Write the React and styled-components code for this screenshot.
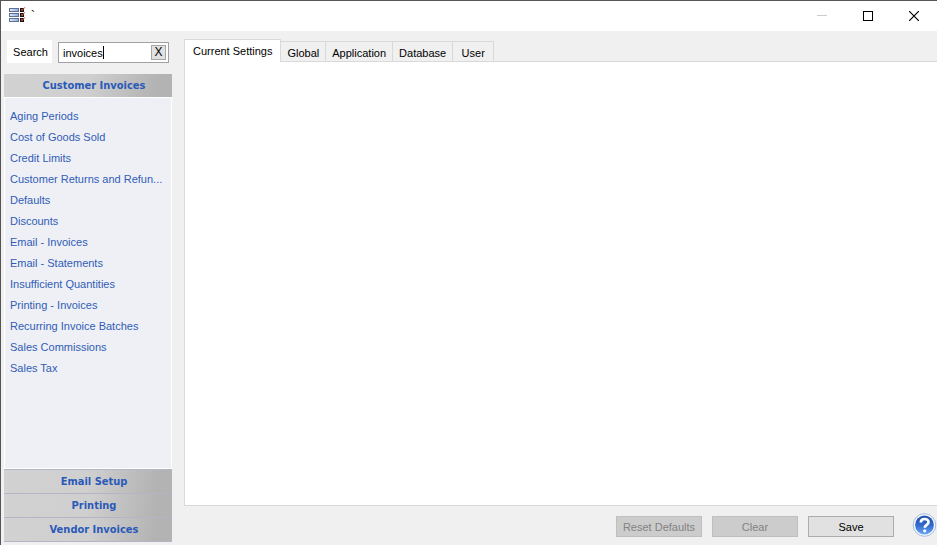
import { useState } from "react";
import styled, { createGlobalStyle } from "styled-components";

const GlobalStyle = createGlobalStyle`
    * {
        box-sizing:border-box;
    }
    body {
        margin:0;
        background-color:#f0f0f0;
        font-family:"Liberation Sans", Arial, sans-serif;
        font-size:11px;
        line-height:16px;
        color:#000;
    }
    button, input {
        font:inherit;
        color:inherit;
    }
`;

const Window = styled.div`
    display:flex;
    flex-direction:column;
    min-height:100vh;
    border-top:1px solid #555;
    border-left:1px solid #555;
`;

// ======================================================================
// Title bar

const TitleBar = styled.header`
    display:flex;
    align-items:center;
    height:30px;
    padding-left:8px;
    background-color:#fff;
`;

const Title = styled.span`
    flex:1;
    padding-left:4px;
    font-size:12px;
`;

const WindowButton = styled.button`
    display:flex;
    align-items:center;
    justify-content:center;
    width:46px;
    height:30px;
    padding:0;
    border:0;
    background:none;
    color:${props=>props.disabled ? "#ccc" : "#000"};
`;

const AppIcon = ()=>{
    return (
        <svg width="18" height="18" viewBox="0 0 18 18" aria-hidden="true">
            <defs>
                <linearGradient id="bar">
                    <stop offset="0" stopColor="#dfeaff" />
                    <stop offset="1" stopColor="#8fa9e6" />
                </linearGradient>
            </defs>
            {[0, 5, 10].map(y=>(
                <g key={y}>
                    <rect x="0.5" y={y + 1.5} width="9" height="3" fill="url(#bar)" stroke="#60708f" />
                    <rect x="11.75" y={y + 1.75} width="2.5" height="2.5" fill="#fff" stroke="#1c0f0f" strokeWidth="1.5" />
                    <path d={`M12.3 ${y + 2.3}L13.3 ${y + 3.4}L15.8 ${y + 0.3}`} fill="none" stroke="#e0452f" strokeWidth="1" />
                </g>
            ))}
        </svg>
    );
}

// ======================================================================
// Sidebar

const Body = styled.div`
    display:flex;
    flex:1;
`;

const Sidebar = styled.nav`
    display:flex;
    flex-direction:column;
    flex:none;
    width:171px;
    padding:9px 0 3px 3px;
`;

const SearchRow = styled.div`
    display:flex;
    align-items:flex-end;
    gap:6px;
    padding:0 3px;
    margin-bottom:11px;
`;

const SearchLabel = styled.label`
    width:45px;
    height:23px;
    line-height:24px;
    padding-left:2px;
    text-align:center;
    background-color:#fff;
`;

const SearchBox = styled.div`
    display:flex;
    align-items:center;
    flex:1;
    min-width:0;
    height:21px;
    padding:0 2px 0 4px;
    border:1px solid #a0a0a5;
    background-color:#fff;
`;

const SearchInput = styled.input`
    field-sizing:content;
    max-width:80px;
    padding:0;
    border:0;
    outline:0;
    background:none;
    caret-color:transparent;
`;

const Caret = styled.span`
    width:1px;
    height:13px;
    background-color:#000;
`;

const ClearSearch = styled.button`
    width:15px;
    height:15px;
    margin-left:auto;
    padding:0;
    font-size:12px;
    line-height:13px;
    border:1px solid #a6a6a6;
    background-color:#e1e1e1;
`;

const GroupButton = styled.button`
    flex:none;
    height:${props=>props.$open ? "23px" : "24px"};
    padding:0 0 0 12px;
    border:0;
    border-top:${props=>props.$open ? "0" : "1px solid #b4b4c8"};
    background:linear-gradient(100deg, #d2d2d2 0%, #cfcfcf 50%, #b3b3b3 90%);
    color:#2a5ab8;
    font-family:"DejaVu Sans Condensed", "DejaVu Sans", sans-serif;
    font-weight:bold;
`;

const LinkList = styled.ul`
    flex:1;
    margin:0;
    padding:8px 5px;
    border:1px solid #fff;
    list-style:none;
    background-color:#eff0f6;
`;

const PageLink = styled.a`
    display:block;
    height:21px;
    line-height:21px;
    color:#2f5db5;
    text-decoration:none;
    white-space:nowrap;
`;

const Groups = styled.div`
    display:flex;
    flex-direction:column;
    border-bottom:1px solid #b4b4c8;
`;

// ======================================================================
// Tabs

const Main = styled.main`
    display:flex;
    flex-direction:column;
    flex:1;
    min-width:0;
    padding:8px 0 0 12px;
`;

const TabList = styled.div`
    display:flex;
    align-items:flex-end;
    height:22px;
`;

const Tab = styled.button`
    position:relative;
    min-width:41px;
    height:${props=>props.$active ? "23px" : "20px"};
    margin-bottom:${props=>props.$active ? "-1px" : "0"};
    padding:${props=>props.$active ? "0 8px" : "2px 6px 0"};
    border:1px solid #d9d9d9;
    border-left-width:${props=>props.$first ? "1px" : "0"};
    border-bottom:0;
    background-color:${props=>props.$active ? "#fff" : "#f0f0f0"};
    white-space:nowrap;
`;

const TabPanel = styled.section`
    flex:1;
    border:1px solid #d9d9d9;
    border-right:0;
    background-color:#fff;
`;

// ======================================================================
// Footer

const Footer = styled.footer`
    display:flex;
    align-items:center;
    justify-content:flex-end;
    gap:10px;
    height:39px;
    padding-top:2px;
`;

const ActionButton = styled.button`
    width:86px;
    height:21px;
    padding:0;
    border:1px solid ${props=>props.disabled ? "#bfbfbf" : "#adadad"};
    background-color:${props=>props.disabled ? "#ccc" : "#e1e1e1"};
    color:${props=>props.disabled ? "#838383" : "#000"};
`;

const HelpButton = styled.button`
    display:flex;
    margin:0 0 3px 8px;
    padding:0;
    border:0;
    background:none;
`;

const HelpIcon = ()=>{
    return (
        <svg width="25" height="24" viewBox="0 0 25 24" aria-hidden="true">
            <defs>
                <linearGradient id="help" x2="0" y2="1">
                    <stop offset="0" stopColor="#2350ae" />
                    <stop offset="0.5" stopColor="#3268cc" />
                    <stop offset="1" stopColor="#69a8f4" />
                </linearGradient>
            </defs>
            <circle cx="12.5" cy="12" r="11.3" fill="#f7f9fd" stroke="#a9b9dc" />
            <circle cx="12.5" cy="12" r="9.4" fill="url(#help)" />
            <path d="M8.8 9.4C8.8 4.9 16.5 4.9 16.5 9.2C16.5 11.9 12.7 11.8 12.7 14.8" fill="none" stroke="#fff" strokeWidth="2.7" />
            <circle cx="12.7" cy="17.8" r="1.6" fill="#fff" />
        </svg>
    );
}

// ======================================================================

const pages = [
    "Aging Periods",
    "Cost of Goods Sold",
    "Credit Limits",
    "Customer Returns and Refun...",
    "Defaults",
    "Discounts",
    "Email - Invoices",
    "Email - Statements",
    "Insufficient Quantities",
    "Printing - Invoices",
    "Recurring Invoice Batches",
    "Sales Commissions",
    "Sales Tax",
];

const groups = ["Email Setup", "Printing", "Vendor Invoices"];

const tabs = ["Current Settings", "Global", "Application", "Database", "User"];

function App() {
    const [search, setSearch] = useState("invoices");
    const [tab, setTab] = useState(tabs[0]);

    return (
        <Window>
            <GlobalStyle />
            <TitleBar>
                <AppIcon />
                <Title>`</Title>
                <WindowButton disabled aria-label="Minimize">
                    <svg width="10" height="10"><path d="M0 4.5H10" stroke="currentColor" /></svg>
                </WindowButton>
                <WindowButton aria-label="Maximize">
                    <svg width="10" height="10"><rect x="0.5" y="0.5" width="9" height="9" fill="none" stroke="currentColor" /></svg>
                </WindowButton>
                <WindowButton aria-label="Close">
                    <svg width="10" height="10"><path d="M0 0L10 10M10 0L0 10" stroke="currentColor" strokeWidth="1.2" /></svg>
                </WindowButton>
            </TitleBar>
            <Body>
                <Sidebar>
                    <SearchRow>
                        <SearchLabel htmlFor="search">Search</SearchLabel>
                        <SearchBox>
                            <SearchInput id="search" value={search} onChange={e=>setSearch(e.target.value)} />
                            <Caret />
                            <ClearSearch aria-label="Clear search" onClick={()=>setSearch("")}>X</ClearSearch>
                        </SearchBox>
                    </SearchRow>
                    <GroupButton $open>Customer Invoices</GroupButton>
                    <LinkList>
                        {pages.map(page=>(
                            <li key={page}><PageLink href="#">{page}</PageLink></li>
                        ))}
                    </LinkList>
                    <Groups>
                        {groups.map(group=><GroupButton key={group}>{group}</GroupButton>)}
                    </Groups>
                </Sidebar>
                <Main>
                    <TabList role="tablist">
                        {tabs.map((name, i)=>(
                            <Tab
                                key={name}
                                role="tab"
                                aria-selected={name === tab}
                                $active={name === tab}
                                $first={i === 0}
                                onClick={()=>setTab(name)}
                            >
                                {name}
                            </Tab>
                        ))}
                    </TabList>
                    <TabPanel role="tabpanel" aria-label={tab} />
                    <Footer>
                        <ActionButton disabled>Reset Defaults</ActionButton>
                        <ActionButton disabled>Clear</ActionButton>
                        <ActionButton>Save</ActionButton>
                        <HelpButton aria-label="Help"><HelpIcon /></HelpButton>
                    </Footer>
                </Main>
            </Body>
        </Window>
    );
}

export default App;
